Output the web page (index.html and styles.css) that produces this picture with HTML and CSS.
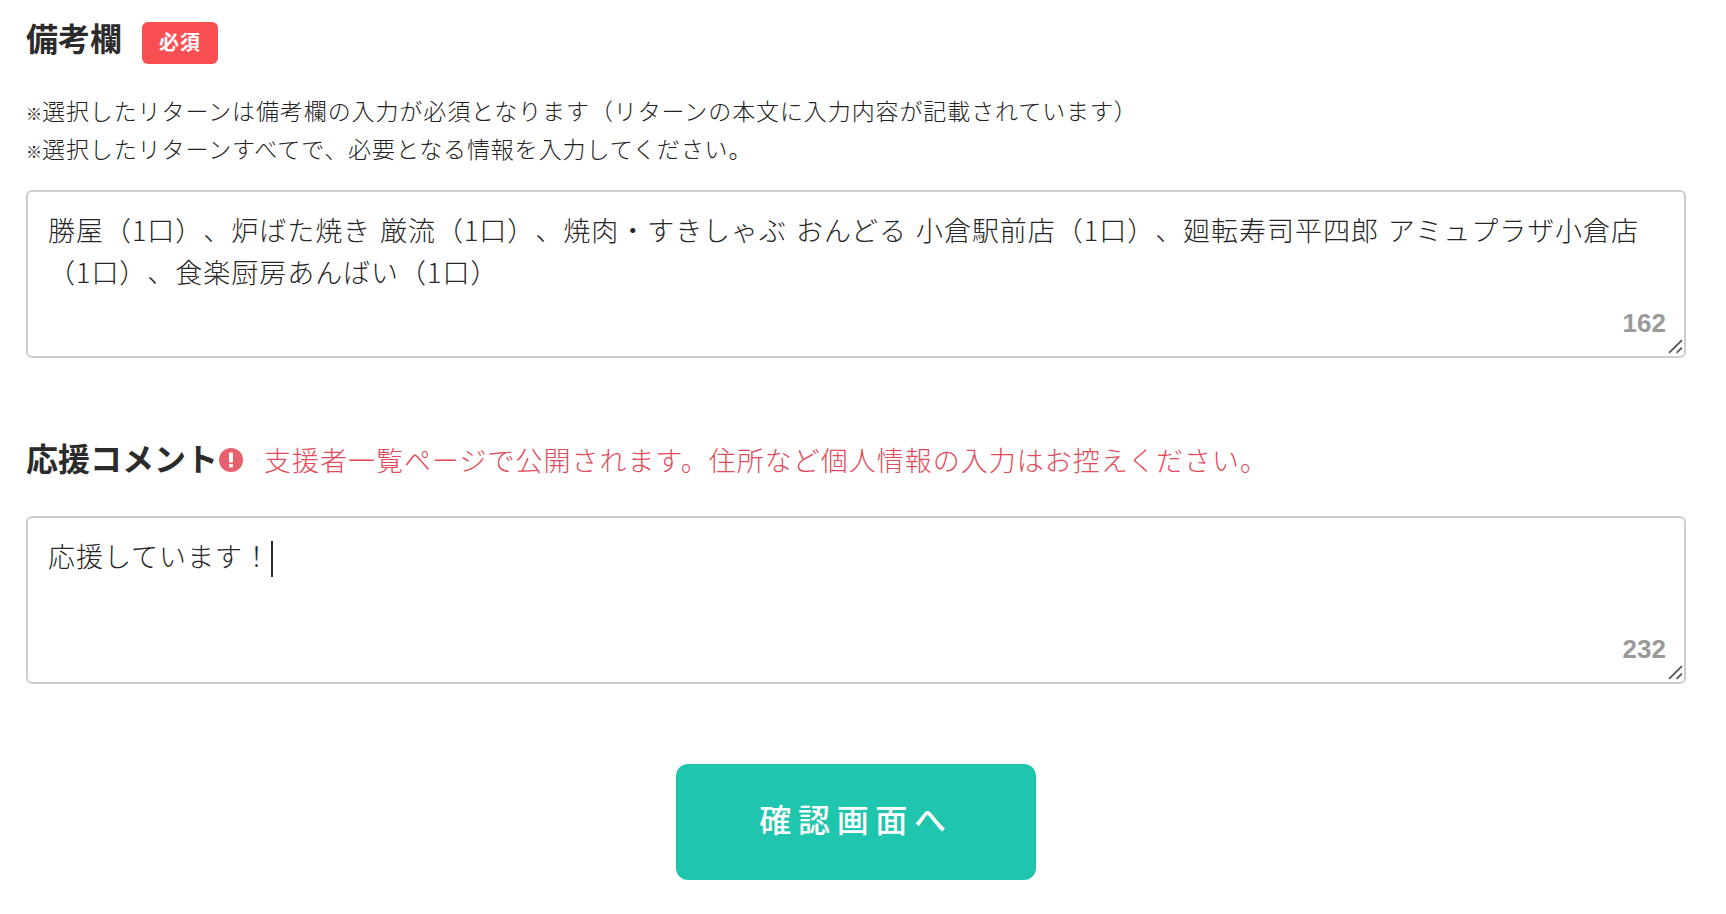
FILE: index.html
```html
<!DOCTYPE html>
<html lang="ja">
<head>
<meta charset="utf-8">
<title>備考欄</title>
<link rel="stylesheet" href="styles.css">
</head>
<body>
<form class="form">
  <div class="heading-row heading-row--first">
    <h2 class="heading heading--top">備考欄</h2>
    <span class="badge">必須</span>
  </div>
  <div class="notes">
    <p><span class="mark">※</span>選択したリターンは備考欄の入力が必須となります（リターンの本文に入力内容が記載されています）</p>
    <p><span class="mark">※</span>選択したリターンすべてで、必要となる情報を入力してください。</p>
  </div>
  <div class="field">
    <div class="field-text">勝屋（1口）、炉ばた焼き 厳流（1口）、焼肉・すきしゃぶ おんどる 小倉駅前店（1口）、廻転寿司平四郎 アミュプラザ小倉店（1口）、食楽厨房あんばい（1口）</div>
    <span class="count">162</span>
    <svg class="grip" viewBox="0 0 14 14" aria-hidden="true"><path d="M1 13 13 1M8 13l5-5"/></svg>
  </div>
  <div class="heading-row heading-row--second">
    <h2 class="heading">応援コメント</h2>
    <svg class="alert" viewBox="0 0 24 24" aria-hidden="true"><circle cx="12" cy="12" r="12"/><rect class="alert-mark" x="10" y="4.5" width="4" height="10" rx="1"/><rect class="alert-mark" x="10" y="16" width="4" height="3.6" rx="1"/></svg>
    <span class="warn">支援者一覧ページで公開されます。住所など個人情報の入力はお控えください。</span>
  </div>
  <div class="field field--second">
    <div class="field-text">応援しています！<span class="caret"></span></div>
    <span class="count">232</span>
    <svg class="grip" viewBox="0 0 14 14" aria-hidden="true"><path d="M1 13 13 1M8 13l5-5"/></svg>
  </div>
  <div class="actions">
    <button class="submit" type="button">確認画面へ</button>
  </div>
</form>
</body>
</html>
```
FILE: styles.css
```css
* { box-sizing: border-box; }
html, body { margin: 0; background: #fff; }
body {
  font-family: "Noto Sans CJK JP", "Liberation Sans", sans-serif;
  color: #333;
  text-spacing-trim: space-all;
}
.form { padding: 22px 40px 30px 26px; }
.heading-row { display: flex; align-items: center; }
.heading-row--first { height: 42px; }
.heading-row--second { margin-top: 79px; height: 46px; }
.heading {
  margin: 0 0 6px;
  font-size: 32px;
  font-weight: 700;
  line-height: 1;
  color: #2b2b2b;
}
.heading--top { margin-bottom: 13px; }
.badge {
  margin-left: 20px;
  width: 76px;
  height: 42px;
  padding-bottom: 3px;
  display: flex;
  align-items: center;
  justify-content: center;
  border-radius: 6px;
  background: #f94f52;
  color: #fff;
  font-size: 20px;
  font-weight: 700;
  letter-spacing: 1px;
}
.notes { margin-top: 26.5px; font-size: 23px; font-weight: 300; line-height: 38px; letter-spacing: 0.9px; color: #222; }
.notes p { margin: 0; }
.mark { font-size: 16px; font-weight: 500; letter-spacing: 0; line-height: 1; }
.field {
  position: relative;
  margin-top: 23px;
  height: 168px;
  border: 2px solid #cdcdcd;
  border-radius: 6px;
  padding: 17px 20px;
  background: #fff;
}
.field--second { margin-top: 33px; }
.field-text {
  font-size: 27px;
  font-weight: 300;
  line-height: 42.5px;
  letter-spacing: 0.97px;
  word-spacing: 2px;
  color: #262626;
}
.caret {
  display: inline-block;
  width: 2px;
  height: 36px;
  background: #2b2b2b;
  vertical-align: middle;
}
.count {
  position: absolute;
  right: 18px;
  bottom: 20px;
  font-family: "Liberation Sans", Arial, sans-serif;
  font-size: 26px;
  font-weight: 700;
  line-height: 1;
  color: #9a9a9a;
}
.grip { position: absolute; right: 1px; bottom: 2px; width: 15px; height: 15px; }
.grip path { fill: none; stroke: #555; stroke-width: 1.7; }
.alert { margin-left: 1px; width: 24px; height: 24px; flex: none; fill: #e8606c; }
.alert-mark { fill: #fff; }
.warn {
  margin: 0 0 1px 21px;
  font-size: 27px;
  font-weight: 300;
  letter-spacing: 1px;
  color: #e34a59;
}
.actions { display: flex; justify-content: center; margin-top: 80px; }
.submit {
  width: 360px;
  height: 116px;
  padding: 0 0 8px;
  border: 0;
  border-radius: 12px;
  background: #20c5ad;
  color: #fff;
  font-family: inherit;
  font-size: 32px;
  font-weight: 500;
  letter-spacing: 6.7px;
}
```
